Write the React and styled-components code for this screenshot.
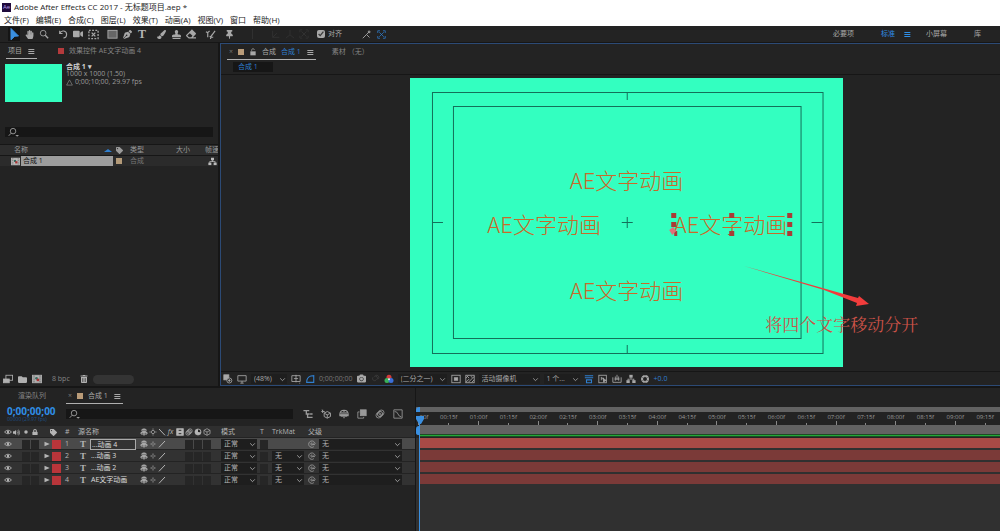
import React, { useState } from 'react';
import styled, { createGlobalStyle } from 'styled-components';
import {
  FaHandPaper,
  FaVideo,
  FaPenNib,
  FaPaintBrush,
  FaStamp,
  FaEraser,
  FaThumbtack,
  FaTag,
  FaLock,
  FaTrashAlt,
  FaCamera,
  FaFolder,
  FaVolumeUp,
} from 'react-icons/fa';

const MENUS = ['文件(F)', '编辑(E)', '合成(C)', '图层(L)', '效果(T)', '动画(A)', '视图(V)', '窗口', '帮助(H)'];

const LAYERS = [
  { id: 1, name: '...动画 4', selected: true },
  { id: 2, name: '...动画 3', matte: true },
  { id: 3, name: '...动画 2', matte: true },
  { id: 4, name: 'AE文字动画', matte: true },
];

const MARKS = Array.from({ length: 20 }, (_, i) => {
  if (i === 0) return '00f';
  return `0${Math.floor(i / 2)}:${i % 2 ? '15' : '00'}f`;
});

/* ---------- icons ---------- */

const PATHS = {
  arrow: <path d="M3 0.5 L10.5 8 L6.8 8.2 L3 11.8 Z" fill="currentColor" />,
  search: (
    <>
      <circle cx="5" cy="5" r="3.4" />
      <path d="M7.5 7.5 L11 11" strokeWidth="1.6" />
    </>
  ),
  find: (
    <>
      <circle cx="5.5" cy="4.5" r="3" />
      <path d="M3.4 6.8 L0.8 9.6" />
      <path d="M8 8.6 h4 l-2 2 z" fill="currentColor" stroke="none" />
    </>
  ),
  rotate: <path d="M2 2 v3.4 h3.4 M2.2 5.2 A4.2 4.2 0 1 1 6.5 10.8" strokeWidth="1.3" />,
  anchor: (
    <>
      <rect x="1" y="1.5" width="10" height="9" strokeDasharray="2 1.5" strokeWidth="1.4" />
      <path d="M4 4 l4 4 M8 4 l-4 4" strokeWidth="1.4" />
    </>
  ),
  rect: <rect x="1" y="1.5" width="10" height="8.5" fill="#666" />,
  roto: <path d="M1 3 l2 1 v5 M3 4 l2 -2 M6 11 q0 -3 2 -5 l3 -4 M5 8 l4 1" strokeWidth="1.3" />,
  local: <path d="M2 10 V2 M2 10 h8 M2 10 l5 -5" />,
  axis: <path d="M6 7 V1 M6 7 l-5 4 M6 7 l5 4" />,
  snapA: <path d="M1 11 L6 6 M6 6 l4 4 M6 6 l3 -3 M8.5 1.5 h2 v2 h-2 z" strokeWidth="1.2" />,
  snapB: <path d="M1 4 V1 h3 M8 1 h3 v3 M11 8 v3 H8 M4 11 H1 V8 M3 3 l6 6 M9 3 l-6 6" />,
  menu: <path d="M2 3.75 h9 M2 6.75 h9 M2 9.75 h9" strokeWidth="1.5" />,
  lock: (
    <>
      <rect x="2" y="5" width="8" height="6" fill="currentColor" stroke="none" />
      <path d="M4 5 V3 a2 2 0 0 1 4 0" />
    </>
  ),
  triangle: <path d="M6 1.5 L11 10.5 H1 Z" />,
  flow: (
    <g fill="currentColor" stroke="none">
      <rect x="4" y="1" width="4" height="3.4" />
      <rect x="0.5" y="7.4" width="4" height="3.4" />
      <rect x="7.5" y="7.4" width="4" height="3.4" />
      <path d="M5.5 4 h1 v1.6 h3.4 v2 h-1 v-1 h-6 v1 h-1 v-2 h3.6 z" />
    </g>
  ),
  comp: (
    <>
      <rect x="0.5" y="1.5" width="11" height="9" fill="currentColor" />
      <path d="M2.4 2 v8 M9.6 2 v8" stroke="#333" strokeWidth="0.8" strokeDasharray="1.2 1" />
      <circle cx="5.4" cy="5.2" r="1.6" fill="#356b60" stroke="none" />
      <rect x="5.6" y="5.6" width="3" height="3" fill="#a33" stroke="none" />
    </>
  ),
  interpret: (
    <>
      <rect x="3.5" y="1.5" width="8" height="6" />
      <rect x="0.5" y="6" width="7" height="4.5" fill="currentColor" />
    </>
  ),
  stack: (
    <>
      <rect x="1" y="1" width="6" height="6" fill="currentColor" />
      <circle cx="7.6" cy="7.8" r="3" fill="#222" />
      <circle cx="7.6" cy="7.8" r="1" fill="currentColor" />
    </>
  ),
  monitor: <path d="M1 2 h10 v6.5 H1 z M4 11 h4 M6 8.5 V11" />,
  grid: <path d="M1 2 h10 v7 H1 z M6 1 v9 M3.5 5.5 h5 M10 11 h1" />,
  mask: <path d="M2 10 Q2 4 7 2.5 L10.5 2 V10 Z" strokeWidth="1.3" />,
  rings: <path d="M3.5 4 a2.5 2.5 0 1 0 4 3 M5 3 a2.5 2.5 0 1 1 3 4 M6.5 2 a2.5 2.5 0 1 1 3 4" />,
  rgb: (
    <g stroke="none">
      <circle cx="6" cy="3.8" r="3" fill="#d23b3b" />
      <circle cx="3.6" cy="7.8" r="3" fill="#38b25a" />
      <circle cx="8.4" cy="7.8" r="3" fill="#3b6fd8" />
      <circle cx="6" cy="6.4" r="1.2" fill="#eee" />
    </g>
  ),
  roi: (
    <>
      <rect x="1" y="1.5" width="10" height="9" />
      <rect x="4" y="4.5" width="4" height="3" fill="currentColor" />
    </>
  ),
  alpha: (
    <>
      <rect x="1" y="1.5" width="10" height="9" />
      <path d="M1 10 L5 6 M4 10 L11 3 M1 5 l3 -3 M8 10 l3 -3 M3 3 l2 2 M7 3 l2 1" />
    </>
  ),
  pixel: <path d="M1 2 h10 M1 4.5 h10 M3 7 v3.5 h6 V7 z" strokeWidth="1.3" />,
  preview: (
    <>
      <rect x="1" y="1.5" width="9" height="9" />
      <path d="M4 3.5 v4 M4 5 h3 M6 5 l4 3 h-2 l-1 2 z" fill="currentColor" />
    </>
  ),
  timeline: <path d="M1 4 v6 h10 V4 M4 3 v5 M8 3 v5 M6 1 v6 M3 6 h6" />,
  exposure: (
    <>
      <circle cx="6" cy="6" r="3.6" strokeWidth="2.4" />
      <path d="M6 0.8 v2 M10.5 3.4 l-1.8 1 M10.5 8.6 l-1.8 -1 M6 11.2 v-2 M1.5 8.6 l1.8 -1 M1.5 3.4 l1.8 1" stroke="#222" strokeWidth="0.6" />
    </>
  ),
  eye: (
    <>
      <path d="M0.8 6 Q6 0.6 11.2 6 Q6 11.4 0.8 6 Z" strokeWidth="1.3" />
      <circle cx="6" cy="6" r="1.8" fill="currentColor" stroke="none" />
    </>
  ),
  dot: <circle cx="6" cy="6" r="2.6" fill="currentColor" stroke="none" />,
  shy: <path d="M3 2 h6 v3 h-6 z M1.5 9 v-2.4 h9 V9 z M6 0.5 v11" strokeWidth="1.4" />,
  sun: <path d="M6 3.4 a2.6 2.6 0 1 0 0.1 0 M6 0.8 v1.4 M6 9.8 v1.4 M0.8 6 h1.4 M9.8 6 h1.4" strokeWidth="1.2" />,
  slash: <path d="M1.5 11 L10.5 1.5" strokeWidth="1.5" />,
  back: <path d="M1.5 1.5 L10.5 11" strokeWidth="1.5" />,
  film: (
    <>
      <rect x="1" y="1" width="10" height="10" fill="currentColor" />
      <path d="M4 3.5 h4 M4 8.5 h4" stroke="#222" strokeWidth="1.4" />
    </>
  ),
  blur: (
    <>
      <circle cx="4.4" cy="7.6" r="3.2" />
      <circle cx="6" cy="6" r="3.2" />
      <circle cx="7.6" cy="4.4" r="3.2" />
    </>
  ),
  half: (
    <>
      <circle cx="6" cy="6" r="4.6" fill="currentColor" />
      <path d="M6 2.4 a3.6 3.6 0 0 1 3.4 4 L6 6 z" fill="#222" stroke="none" />
    </>
  ),
  cube: <path d="M6 1 L10.6 3.5 V8.5 L6 11 L1.4 8.5 V3.5 Z M1.4 3.5 L6 6 L10.6 3.5 M6 6 V11" />,
  expand: <path d="M1 1.5 L11.5 6 L1 10.5 Z" fill="currentColor" stroke="none" />,
  whip: <path d="M7.4 6 a1.6 1.6 0 1 1 -1.4 -1.6 M7.6 4 v2.6 q1.8 2 3 -1 A4.8 4.8 0 1 0 8.8 10" />,
  miniFlow: <path d="M0.5 2 h7 M4 2 v4 h4 M5.5 6 v4 h4 M8.5 6 h3 M9.5 10 h2" strokeWidth="1.6" />,
  draft: <path d="M1 1 l3 3 M2 0.8 v4 M0.4 3 h4 M7.5 3 L11.4 5 V9 L7.5 11 L3.8 9 V5 Z M3.8 5 L7.5 7 L11.4 5 M7.5 7 v4" strokeWidth="1.2" />,
  shyBig: <path d="M1 7 Q1 1.5 6 1.5 T11 7 Z M6 2 v9 M0.5 8 h11 M3.6 3.6 v6 M8.4 3.6 v6" strokeWidth="1.4" />,
  blend: (
    <>
      <rect x="4" y="1" width="7" height="7" fill="currentColor" />
      <path d="M3 3.5 H1 V11 H8 V9.5" />
    </>
  ),
  graph: <path d="M1 1 h10 v10 H1 z M2 3 q3 0 4 3 t4 3.5" />,
  chevron: <path d="M2 4 L6 8 L10 4" strokeWidth="1.4" />,
};

function Icon({ name, size = 10 }) {
  return (
    <svg width={size} height={size} viewBox="0 0 12 12" fill="none" stroke="currentColor" strokeWidth="1" aria-hidden="true">
      {PATHS[name]}
    </svg>
  );
}

function Drop({ label, value, width }) {
  return (
    <DropWrap $width={width}>
      <DropSelect aria-label={label} defaultValue={value}>
        <option>{value}</option>
      </DropSelect>
      <DropArrow>
        <Icon name="chevron" size={7} />
      </DropArrow>
    </DropWrap>
  );
}

function Toolbar() {
  const [tool, setTool] = useState('select');
  const tools = [
    ['select', <Icon name="arrow" size={12} />, 3],
    ['hand', <FaHandPaper size={9} />, 3],
    ['zoom', <Icon name="search" size={10} />, 7],
    ['rotate', <Icon name="rotate" size={10} />, 3],
    ['camera', <FaVideo size={10} />, 3],
    ['anchor', <Icon name="anchor" size={11} />, 7],
    ['shape', <Icon name="rect" size={11} />, 3],
    ['pen', <FaPenNib size={9} />, 3],
    ['text', <TypeMark $size={12}>T</TypeMark>, 7],
    ['brush', <FaPaintBrush size={9} />, 3],
    ['stamp', <FaStamp size={9} />, 3],
    ['eraser', <FaEraser size={10} />, 7],
    ['roto', <Icon name="roto" size={11} />, 7],
    ['puppet', <FaThumbtack size={9} />, 3],
  ];

  return (
    <ToolRow>
      {tools.map(([id, icon, gap]) => (
        <Tool key={id} aria-label={id} $active={tool === id} $gap={gap} onClick={() => setTool(id)}>
          {icon}
        </Tool>
      ))}
      <AxisGroup>
        <Icon name="local" />
        <Icon name="axis" />
        <Icon name="snapB" />
      </AxisGroup>
      <Snap>
        <input type="checkbox" defaultChecked />
        对齐
      </Snap>
      <SnapIcons>
        <Icon name="snapA" size={9} />
        <BlueMark>
          <Icon name="snapB" size={9} />
        </BlueMark>
      </SnapIcons>
      <Workspaces>
        <Workspace>必要项</Workspace>
        <Workspace $active>
          标准
          <Icon name="menu" size={8} />
        </Workspace>
        <Workspace>小屏幕</Workspace>
        <Workspace>库</Workspace>
      </Workspaces>
    </ToolRow>
  );
}

function Project() {
  return (
    <ProjectPanel>
      <PanelTabs>
        <Tab $active>
          项目
          <Icon name="menu" size={8} />
        </Tab>
        <Tab $gap={19}>
          <Swatch $color="#b43a3c" />
          效果控件 AE文字动画 4
        </Tab>
      </PanelTabs>
      <Summary>
        <Thumb />
        <div>
          <SummaryName>合成 1 ▾</SummaryName>
          <SummaryLine>1000 x 1000 (1.50)</SummaryLine>
          <SummaryLine>
            <Icon name="triangle" size={7} /> 0;00;10;00, 29.97 fps
          </SummaryLine>
        </div>
      </Summary>
      <ProjectSearch>
        <Icon name="find" size={11} />
        <input type="text" aria-label="搜索项目" />
      </ProjectSearch>
      <Files>
        <colgroup>
          <col width="116" />
          <col width="14" />
          <col width="46" />
          <col width="29" />
          <col />
        </colgroup>
        <thead>
          <tr>
            <th>
              <NameHead>
                名称
                <SortMark />
              </NameHead>
            </th>
            <th>
              <FaTag size={7} />
            </th>
            <th>类型</th>
            <th>大小</th>
            <th>帧速</th>
          </tr>
        </thead>
        <tbody>
          <tr>
            <td>
              <FileName>
                <Icon name="comp" size={9} />
                <span>合成 1</span>
              </FileName>
            </td>
            <td>
              <Swatch $color="#b39a78" />
            </td>
            <td>合成</td>
            <td />
            <td>
              <FlowCell>
                <Icon name="flow" size={9} />
              </FlowCell>
            </td>
          </tr>
        </tbody>
      </Files>
      <ProjectFoot>
        <Icon name="interpret" />
        <FaFolder size={9} />
        <Icon name="comp" />
        <Depth>8 bpc</Depth>
        <FaTrashAlt size={8} />
        <Pill />
      </ProjectFoot>
    </ProjectPanel>
  );
}

function Viewer() {
  return (
    <ViewerPanel>
      <PanelTabs>
        <Tab $active>
          <Close>×</Close>
          <Swatch $color="#b99b78" />
          <Icon name="lock" size={8} />
          合成 <Blue>合成 1</Blue>
          <Icon name="menu" size={8} />
        </Tab>
        <Tab $gap={14}>素材 （无）</Tab>
      </PanelTabs>
      <CompPath>
        <CompButton>合成 1</CompButton>
      </CompPath>
      <Stage>
        <Comp>
          <Guides viewBox="0 0 434 289" preserveAspectRatio="none">
            <rect x="22.5" y="14.5" width="391" height="261" />
            <rect x="43.5" y="28.5" width="348" height="232" />
            <path d="M217.5 14 v8 M217.5 267 v9 M22 144.5 h11 M402 144.5 h11 M212 144.5 h11 M217.5 139 v11" />
          </Guides>
          <Title $x={50} $y={35}>AE文字动画</Title>
          <Title $x={31} $y={50}>AE文字动画</Title>
          <Title $x={74} $y={50}>
            AE文字动画
            <Handles viewBox="0 0 122 26">
              <path d="M0 0 h5 v5 h-5 z M58 0 h5 v5 h-5 z M116 0 h5 v5 h-5 z M0 9 h5 v5 h-5 z M116 9 h5 v5 h-5 z M3 18 h3 v5 h-3 z M58 18 h5 v5 h-5 z M116 18 h5 v5 h-5 z" />
              <path d="M-2 17 l4 -3 l3 4 l-4 4 z" fill="#e07078" />
            </Handles>
          </Title>
          <Title $x={50} $y={73}>AE文字动画</Title>
          <Arrow viewBox="0 0 128 42">
            <path d="M0 0 L114 32 L115 30 L125 38 L112 40 L113 37 L80 24 Z" fill="#f23c3c" />
          </Arrow>
          <Note>将四个文字移动分开</Note>
        </Comp>
      </Stage>
      <ViewerFoot>
        <Icon name="stack" />
        <Icon name="monitor" />
        <Drop label="放大率" value="(48%)" width={36} />
        <Icon name="grid" />
        <BlueMark>
          <Icon name="mask" />
        </BlueMark>
        <Dim>0;00;00;00</Dim>
        <FaCamera size={9} />
        <Faint>
          <Icon name="rings" />
        </Faint>
        <Icon name="rgb" />
        <Drop label="分辨率" value="(二分之一)" width={49} />
        <Icon name="roi" />
        <Icon name="alpha" />
        <Drop label="视图" value="活动摄像机" width={61} />
        <Drop label="视图数" value="1 个..." width={36} />
        <BlueMark>
          <Icon name="pixel" />
        </BlueMark>
        <Icon name="preview" />
        <Icon name="timeline" />
        <Icon name="flow" />
        <Icon name="exposure" />
        <Blue>+0.0</Blue>
      </ViewerFoot>
    </ViewerPanel>
  );
}

function LayerRow({ layer }) {
  return (
    <tr className={layer.selected ? 'selected' : ''}>
      <td>
        <Features>
          <Icon name="eye" size={8} />
          <i />
          <Cell />
          <Cell />
        </Features>
      </td>
      <td>
        <LabelCell>
          <Icon name="expand" size={6} />
          <LabelColor />
        </LabelCell>
      </td>
      <td>
        <Num>{layer.id}</Num>
      </td>
      <td>
        <NameCell>
          <TypeMark $size={9}>T</TypeMark>
          <LayerName $boxed={layer.selected}>{layer.name}</LayerName>
        </NameCell>
      </td>
      <td>
        <Switches>
          <Icon name="shy" size={8} />
          <Icon name="sun" size={6} />
          <Icon name="slash" size={8} />
          <i />
          <i />
          <Cell />
          <Cell />
          <Cell />
        </Switches>
      </td>
      <td>
        <Drop label="模式" value="正常" width={36} />
      </td>
      <td>
        <Cell />
      </td>
      <td>{layer.matte && <Drop label="TrkMat" value="无" width={32} />}</td>
      <td>
        <ParentCell>
          <Icon name="whip" size={8} />
          <Drop label="父级" value="无" />
        </ParentCell>
      </td>
    </tr>
  );
}

function Timeline() {
  return (
    <TimelinePanel>
      <Outline>
        <PanelTabs>
          <Tab $gap={10}>渲染队列</Tab>
          <Tab $active $gap={18}>
            <Close>×</Close>
            <Swatch $color="#b99b78" />
            合成 1
            <Icon name="menu" size={8} />
          </Tab>
        </PanelTabs>
        <TimeBar>
          <TimeCode>
            <strong>0;00;00;00</strong>
            <small>00000 (29.97 fps)</small>
          </TimeCode>
          <LayerSearch>
            <Icon name="find" size={11} />
            <input type="text" aria-label="搜索图层" />
          </LayerSearch>
          <TimeTools>
            <Icon name="miniFlow" />
            <Icon name="draft" />
            <Icon name="shyBig" />
            <Icon name="blend" />
            <Icon name="blur" />
            <Icon name="graph" />
          </TimeTools>
        </TimeBar>
        <Layers>
          <colgroup>
            <col width="44" />
            <col width="18" />
            <col width="16" />
            <col width="61" />
            <col width="82" />
            <col width="39" />
            <col width="12" />
            <col width="36" />
            <col />
          </colgroup>
          <thead>
            <tr>
              <th>
                <Features>
                  <Icon name="eye" size={8} />
                  <FaVolumeUp size={7} />
                  <Icon name="dot" size={8} />
                  <FaLock size={6} />
                </Features>
              </th>
              <th>
                <LabelCell $end>
                  <FaTag size={7} />
                </LabelCell>
              </th>
              <th>
                <Num>#</Num>
              </th>
              <th>源名称</th>
              <th>
                <Switches>
                  <Icon name="shy" size={8} />
                  <Icon name="sun" size={8} />
                  <Icon name="back" size={8} />
                  <em>fx</em>
                  <Icon name="film" size={8} />
                  <Icon name="blur" size={8} />
                  <Icon name="half" size={8} />
                  <Icon name="cube" size={8} />
                </Switches>
              </th>
              <th>模式</th>
              <th>T</th>
              <th>TrkMat</th>
              <th>父级</th>
            </tr>
          </thead>
          <tbody>
            {LAYERS.map((layer) => (
              <LayerRow key={layer.id} layer={layer} />
            ))}
          </tbody>
        </Layers>
      </Outline>
      <Tracks>
        <Navigator />
        <Ruler>
          {MARKS.map((mark, i) => (
            <Mark key={mark} $long={i % 2 === 0}>
              {mark}
            </Mark>
          ))}
        </Ruler>
        <WorkArea />
        <CacheLine />
        <Bars>
          {LAYERS.map((layer) => (
            <Bar key={layer.id} $selected={layer.selected} />
          ))}
        </Bars>
        <Playhead>
          <svg width="9" height="29" viewBox="0 0 9 29" fill="#3a8fe0">
            <path d="M0 5 V3 Q0 0 4 0 V5 Z M0 9 h8 v3 l-3 5 h-2 l-3 -5 z M3 19 q-3 0 -3 3 v4 q0 2 3 2 z" />
          </svg>
        </Playhead>
      </Tracks>
    </TimelinePanel>
  );
}

export default function App() {
  return (
    <>
      <GlobalStyle />
      <Container>
        <TitleBar>
          <Logo>Ae</Logo>
          Adobe After Effects CC 2017 - 无标题项目.aep *
        </TitleBar>
        <MenuBar>
          {MENUS.map((menu) => (
            <MenuItem key={menu}>{menu}</MenuItem>
          ))}
        </MenuBar>
        <Toolbar />
        <Main>
          <Project />
          <Viewer />
        </Main>
        <Timeline />
      </Container>
    </>
  );
}

const GlobalStyle = createGlobalStyle`
  * {
    box-sizing: border-box;
  }
  body {
    margin: 0;
    background: #161616;
    color: #9a9a9a;
    font: 7px/10px "Open Sans", "Noto Sans CJK SC", sans-serif;
  }
  button, input, select {
    margin: 0;
    padding: 0;
    border: 0;
    background: none;
    color: inherit;
    font: inherit;
  }
  svg {
    display: block;
    flex: none;
  }
`;

const Container = styled.div`
  display: flex;
  flex-direction: column;
  min-height: 100vh;
`;

const TitleBar = styled.header`
  display: flex;
  align-items: center;
  gap: 3px;
  height: 14px;
  padding-left: 2px;
  background: #fff;
  color: #222;
  font-size: 8px;
`;

const Logo = styled.span`
  width: 9px;
  background: #1f0a3c;
  color: #b9a0ee;
  font-size: 6px;
  line-height: 9px;
  text-align: center;
`;

const MenuBar = styled.nav`
  display: flex;
  gap: 7px;
  height: 12px;
  padding-left: 4px;
  background: #fff;
  color: #222;
  font-size: 8px;
`;

const MenuItem = styled.button`
  white-space: nowrap;
`;

const ToolRow = styled.div`
  display: flex;
  align-items: center;
  height: 16px;
  padding-left: 8px;
  background: #232323;
  color: #a8a8a8;
`;

const Tool = styled.button`
  display: flex;
  align-items: center;
  justify-content: center;
  width: 12px;
  height: 14px;
  margin-right: ${({ $gap }) => $gap}px;
  color: ${({ $active }) => ($active ? '#3a8fe0' : 'inherit')};
  background: ${({ $active }) => ($active ? '#151515' : 'none')};
`;

const TypeMark = styled.span`
  color: #b5b5b5;
  font: bold ${({ $size }) => $size}px/11px "Liberation Serif", serif;
`;

const AxisGroup = styled.div`
  display: flex;
  gap: 4px;
  margin: 0 8px 0 14px;
  padding-left: 18px;
  border-left: 1px solid #303030;
  color: #343434;
`;

const Snap = styled.label`
  display: flex;
  align-items: center;
  gap: 3px;

  input {
    width: 8px;
    height: 8px;
    accent-color: #a8a8a8;
  }
`;

const SnapIcons = styled.div`
  display: flex;
  gap: 6px;
  margin-left: 20px;
`;

const BlueMark = styled.span`
  color: #2f7fd0;
`;

const Workspaces = styled.div`
  display: flex;
  gap: 15px;
  margin-left: auto;
  padding-right: 19px;
`;

const Workspace = styled.button`
  display: flex;
  align-items: center;
  gap: 8px;
  padding-left: 12px;
  white-space: nowrap;
  color: ${({ $active }) => ($active ? '#2f8ee6' : 'inherit')};

  &:nth-child(3) {
    padding-left: 0;
  }
`;

const Main = styled.main`
  display: flex;
  flex: 1;
  gap: 2px;
  min-height: 344px;
  padding-top: 1px;
`;

const ProjectPanel = styled.section`
  display: flex;
  flex-direction: column;
  flex: 0 0 218px;
  background: #232323;
`;

const PanelTabs = styled.div`
  display: flex;
  height: 16px;
  padding-left: 6px;
`;

const Tab = styled.button`
  display: flex;
  align-items: center;
  gap: 5px;
  height: 16px;
  margin-left: ${({ $gap = 0 }) => $gap}px;
  padding: 0 2px;
  white-space: nowrap;
  color: ${({ $active }) => ($active ? '#a8a8a8' : '#858585')};
  border-bottom: 1px solid ${({ $active }) => ($active ? '#b0b0b0' : 'transparent')};
`;

const Swatch = styled.span`
  display: block;
  flex: none;
  width: 6px;
  height: 6px;
  background: ${({ $color }) => $color};
`;

const Close = styled.span`
  color: #777;
`;

const Blue = styled.span`
  color: #2f7fd0;
`;

const Dim = styled.span`
  color: #777;
`;

const Faint = styled.span`
  color: #3c3c3c;
`;

const Summary = styled.div`
  display: flex;
  gap: 4px;
  padding: 5px 5px 0;
`;

const Thumb = styled.div`
  width: 57px;
  height: 38px;
  background: #33ffc0;
`;

const SummaryName = styled.div`
  color: #d0d0d0;
  font-weight: bold;
  line-height: 6px;
`;

const SummaryLine = styled.div`
  display: flex;
  align-items: center;
  gap: 2px;
  line-height: 8px;
`;

const SearchBox = styled.label`
  display: flex;
  align-items: center;
  height: 10px;
  padding-left: 3px;
  background: #161616;

  input {
    flex: 1;
    min-width: 0;
    height: 10px;
    outline: none;
  }
`;

const ProjectSearch = styled(SearchBox)`
  margin: 25px 5px 7px;
`;

const Files = styled.table`
  width: 100%;
  table-layout: fixed;
  border-collapse: collapse;

  th,
  td {
    height: 10px;
    padding: 0;
    overflow: hidden;
    font-weight: normal;
    text-align: left;
    white-space: nowrap;
    vertical-align: middle;
  }
  thead {
    background: #2d2d2d;
    border-top: 1px solid #161616;
    border-bottom: 1px solid #161616;
  }
  tbody {
    background: #2b2b2b;
    color: #777;
  }
`;

const NameHead = styled.span`
  display: flex;
  align-items: center;
  justify-content: space-between;
  padding: 0 4px 0 14px;
`;

const SortMark = styled.i`
  border: 4px solid transparent;
  border-top: 0;
  border-bottom: 3px solid #2f7fd0;
`;

const FileName = styled.span`
  display: flex;
  align-items: center;
  gap: 1px;
  padding: 0 3px 0 11px;
  color: #bbb;

  span {
    flex: 1;
    padding-left: 2px;
    background: #9d9d9d;
    color: #111;
  }
`;

const FlowCell = styled.span`
  display: flex;
  padding-left: 3px;
  color: #bbb;
`;

const ProjectFoot = styled.div`
  display: flex;
  align-items: center;
  gap: 5px;
  height: 14px;
  margin-top: auto;
  padding-left: 3px;
  color: #b0b0b0;
`;

const Depth = styled.button`
  margin: 0 5px;
  color: #858585;
`;

const Pill = styled.span`
  width: 41px;
  height: 9px;
  border-radius: 5px;
  background: #343434;
`;

const ViewerPanel = styled.section`
  display: flex;
  flex-direction: column;
  flex: 1;
  min-width: 0;
  background: #232323;
  border: 1px solid #2c4a75;
  border-right: 0;
`;

const CompPath = styled.div`
  height: 15px;
  padding: 2px 12px;
  border-bottom: 1px solid #161616;
`;

const CompButton = styled.button`
  display: block;
  width: 40px;
  padding-left: 5px;
  background: #161616;
  color: #2f7fd0;
  text-align: left;
`;

const Stage = styled.div`
  display: flex;
  justify-content: center;
  flex: 1;
  min-height: 0;
  padding: 3px 0 4px 32px;
`;

const Comp = styled.div`
  position: relative;
  aspect-ratio: 3 / 2;
  height: 289px;
  background: #33ffc0;
`;

const Guides = styled.svg`
  position: absolute;
  inset: 0;
  width: 100%;
  height: 100%;
  fill: none;
  stroke: #14705a;
  stroke-width: 1;
`;

const Title = styled.div`
  position: absolute;
  left: ${({ $x }) => $x}%;
  top: ${({ $y }) => $y}%;
  transform: translate(-50%, -50%);
  white-space: nowrap;
  color: #c96a2a;
  font: 300 22px/26px "Noto Sans CJK SC", sans-serif;
`;

const Handles = styled.svg`
  position: absolute;
  left: -3px;
  top: 3px;
  width: 122px;
  height: 26px;
  overflow: visible;
  fill: #a83c36;
`;

const Arrow = styled.svg`
  position: absolute;
  left: 77%;
  top: 65%;
  width: 128px;
  height: 42px;
`;

const Note = styled.div`
  position: absolute;
  left: 82%;
  top: 81%;
  white-space: nowrap;
  color: #cc5248;
  font: 17px/24px "Noto Serif CJK SC", "Noto Sans CJK SC", serif;
`;

const ViewerFoot = styled.div`
  display: flex;
  align-items: center;
  gap: 4px;
  height: 14px;
  padding-left: 2px;
  overflow: hidden;
  white-space: nowrap;
  color: #a8a8a8;
  border-top: 1px solid #161616;
`;

const DropWrap = styled.span`
  position: relative;
  display: block;
  flex: ${({ $width }) => ($width ? 'none' : '1')};
  width: ${({ $width }) => ($width ? `${$width}px` : 'auto')};
  height: 10px;
  background: #1e1e1e;
`;

const DropSelect = styled.select`
  display: block;
  width: 100%;
  height: 10px;
  padding-left: 3px;
  appearance: none;
`;

const DropArrow = styled.span`
  position: absolute;
  right: 1px;
  top: 2px;
  pointer-events: none;
`;

const TimelinePanel = styled.section`
  display: flex;
  min-height: 143px;
  margin-top: 2px;
  background: #232323;
`;

const Outline = styled.div`
  flex: 0 0 415px;
`;

const TimeBar = styled.div`
  display: flex;
  align-items: center;
  height: 22px;
  padding: 0 0 2px 7px;
`;

const TimeCode = styled.div`
  width: 59px;
  color: #2f8ee6;

  strong {
    display: block;
    font-size: 10px;
  }
  small {
    display: block;
    color: #1e4f85;
    font-size: 5px;
    line-height: 7px;
  }
`;

const LayerSearch = styled(SearchBox)`
  width: 227px;
`;

const TimeTools = styled.div`
  display: flex;
  gap: 8px;
  margin-left: 10px;
`;

const Layers = styled.table`
  width: 100%;
  table-layout: fixed;
  border-collapse: collapse;
  color: #b5b5b5;

  th,
  td {
    height: 12px;
    padding: 0;
    font-weight: normal;
    line-height: 10px;
    text-align: left;
    white-space: nowrap;
    vertical-align: middle;
  }
  tr {
    box-shadow: inset 0 -1px #232323;
  }
  thead {
    background: #2f2f2f;
  }
  tbody {
    background: #323232;
  }
  .selected {
    background: #4a4a4a;
  }
`;

const Features = styled.span`
  display: grid;
  grid-template-columns: repeat(4, 9px);
  align-items: center;
  justify-items: center;
  padding-left: 3px;
`;

const Cell = styled.span`
  display: block;
  width: 8px;
  height: 9px;
  background: #262626;
`;

const LabelCell = styled.span`
  display: flex;
  align-items: center;
  justify-content: ${({ $end }) => ($end ? 'center' : 'flex-start')};
  gap: 2px;
`;

const LabelColor = styled.span`
  width: 9px;
  height: 9px;
  background: #b8353a;
`;

const Num = styled.span`
  padding-left: 3px;
`;

const NameCell = styled.span`
  display: flex;
  align-items: center;
  gap: 4px;
  padding-left: 2px;
`;

const LayerName = styled.span`
  width: 46px;
  height: 11px;
  padding-left: 1px;
  color: #ddd;
  line-height: 10px;
  border: ${({ $boxed }) => ($boxed ? '1px solid #aaa' : '0')};
  background: ${({ $boxed }) => ($boxed ? '#333' : 'none')};
`;

const Switches = styled.span`
  display: grid;
  grid-template-columns: repeat(8, 9px);
  align-items: center;
  justify-items: center;
`;

const ParentCell = styled.span`
  display: flex;
  align-items: center;
  gap: 3px;
  padding-right: 13px;
`;

const Tracks = styled.div`
  position: relative;
  flex: 1;
  min-width: 0;
  padding-top: 19px;
  overflow: hidden;
  background: linear-gradient(#232323 50px, #303030 50px);
  border-left: 1px solid #161616;
`;

const Navigator = styled.div`
  height: 5px;
  background: #626262;
`;

const Ruler = styled.div`
  display: flex;
  height: 13px;
  margin-left: -12px;
  background: #232323;
`;

const Mark = styled.span`
  flex: 0 0 5%;
  height: 13px;
  font-size: 6px;
  line-height: 10px;
  text-align: center;
  background: linear-gradient(#888, #888) center bottom / 1px ${({ $long }) => ($long ? 4 : 2)}px no-repeat;

  &:first-child {
    padding-left: 10px;
  }
`;

const WorkArea = styled.div`
  height: 9px;
  margin-left: 4px;
  background: #626262;
`;

const CacheLine = styled.div`
  height: 3px;
  margin-left: 4px;
  background: #22a838;
  border: solid #1d4a24;
  border-width: 1px 0;
`;

const Bars = styled.div`
  display: flex;
  flex-direction: column;
  gap: 2px;
  padding: 1px 0 0 4px;
`;

const Bar = styled.div`
  height: 10px;
  background: ${({ $selected }) => ($selected ? '#a84a46' : '#7b3a38')};
`;

const Playhead = styled.div`
  position: absolute;
  left: 0;
  top: 19px;
  bottom: 0;
  width: 9px;

  &::after {
    content: '';
    position: absolute;
    left: 3px;
    top: 16px;
    bottom: 0;
    width: 1px;
    background: #3a8fe0;
  }
`;
